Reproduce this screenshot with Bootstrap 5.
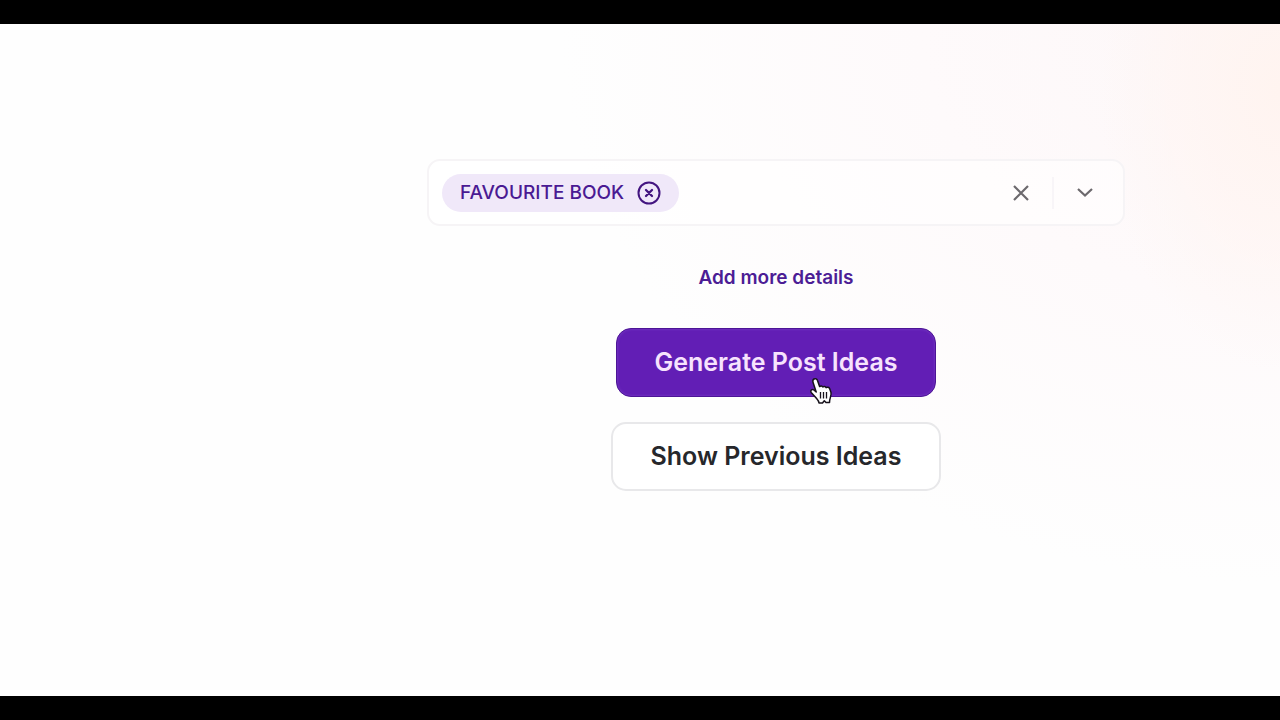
<!DOCTYPE html>
<html lang="en">
<head>
<meta charset="utf-8">
<meta name="viewport" content="width=device-width, initial-scale=1">
<title>Post ideas</title>
<link href="https://cdn.jsdelivr.net/npm/bootstrap@5.3.0/dist/css/bootstrap.min.css" rel="stylesheet">
<style>
  body { font-family: Inter, "Liberation Sans", sans-serif; background: #000; }
  .stage {
    margin: 24px 0;
    padding: 135px 0 0 272px;
    background:
      radial-gradient(ellipse 180px 280px at 100% 10%, #fff4f0 0, #fff5f2b0 50%, #fff5f200 100%),
      radial-gradient(ellipse 720px 560px at 100% 0, #fdf7f8 0, #fefafb 50%, #fefefe00 100%),
      #fefefe;
  }
  .idea-form { width: 100%; max-width: 698px; }
  .picker { height: 67px; padding: 0 28px 0 13px; border: 2px solid #f6f4f6; border-radius: 13px; background: #ffffff90; }
  .topic { height: 38px; padding: 0 18px; gap: 13px; border-radius: 19px; background: #f0e8f9; color: #4a1a93; font-size: 19px; line-height: 30px; font-weight: 500; }
  .icon-btn { padding: 0; border: 0; background: none; color: #6c696d; display: flex; }
  .topic .icon-btn { color: #431580; }
  .tools { height: 36px; gap: 21px; }
  .rule { width: 2px; height: 32px; background: #f8f5f8; }
  .more-link { margin: 37px 0 36px; font-size: 19px; line-height: 29px; font-weight: 600; color: #4c1d95; text-decoration: none; }
  .idea-actions { gap: 25px; }
  .idea-btn { height: 69px; border-radius: 15px; padding: 0 38px; font-size: 25px; font-weight: 600; line-height: 35px; border-width: 2px; }
  .idea-btn-main { --bs-btn-color: #f7e3fd; --bs-btn-bg: #621eb5; --bs-btn-border-color: #4c1596; --bs-btn-hover-color: #fff; --bs-btn-hover-bg: #5719a5; border-width: 1px; box-shadow: inset 0 0 3px 0 #7c40c8; }
  .idea-btn-plain { --bs-btn-color: #26272b; --bs-btn-bg: #fff; --bs-btn-border-color: #e8e8ea; --bs-btn-hover-bg: #f7f7f9; --bs-btn-hover-border-color: #dedee2; }
  .hand { position: absolute; left: 193px; top: 49px; }
</style>
</head>
<body class="min-vh-100 d-flex flex-column">
<main class="stage flex-grow-1">
  <form class="idea-form mx-auto d-flex flex-column align-items-center">
    <div class="picker w-100 d-flex align-items-center justify-content-between">
      <span class="topic d-inline-flex align-items-center">FAVOURITE BOOK
        <button type="button" class="icon-btn" aria-label="Remove favourite book">
          <svg width="24" height="24" viewBox="0 0 24 24" fill="none" stroke="currentColor" stroke-width="2" stroke-linecap="round"><circle cx="12" cy="12" r="10.5"/><path d="M9 9l6 6M15 9l-6 6" stroke-width="2.3"/></svg>
        </button>
      </span>
      <div class="tools d-flex align-items-center">
        <button type="button" class="icon-btn" aria-label="Clear all">
          <svg width="20" height="20" viewBox="0 0 20 20" fill="none" stroke="currentColor" stroke-width="2.2"><path d="M3 3l14 14M17 3L3 17"/></svg>
        </button>
        <span class="rule"></span>
        <button type="button" class="icon-btn" aria-label="Open topic list">
          <svg width="20" height="20" viewBox="0 0 20 20" fill="none" stroke="currentColor" stroke-width="2.2"><path d="M3 6l7 6.500 7-6.500"/></svg>
        </button>
      </div>
    </div>
    <a href="#" class="more-link">Add more details</a>
    <div class="idea-actions d-flex flex-column align-items-center">
      <div class="position-relative d-flex">
        <button type="button" class="btn idea-btn idea-btn-main">Generate Post Ideas</button>
        <svg class="hand" width="25" height="28" viewBox="0 0 25 28" aria-hidden="true"><path d="M5 2C6.500 1.200 8 1.900 8.500 3.500L10.600 9.600C11.500 8.700 13.200 8.900 13.800 10C14.800 9.200 16.500 9.500 17.100 10.700C18.200 9.900 20 10.200 20.600 11.600L22 15.500C22.700 18.500 20.500 21 20.500 25.500H17L15.300 23.700L13.500 26H10C9.800 23.500 8 22.200 6.500 20.300L2.200 15.500C.9 13.500 3 11.600 4.900 13L7.200 14.900L4 5.200C3.600 3.900 3.900 2.600 5 2z" fill="#fff" stroke="#17121b" stroke-width="1.500" stroke-linejoin="round"/><path d="M11.500 15v6.500M14.500 15v6.500M17.500 15v6.500" stroke="#17121b" stroke-width="1.300"/></svg>
      </div>
      <button type="button" class="btn idea-btn idea-btn-plain">Show Previous Ideas</button>
    </div>
  </form>
</main>
<script src="https://cdn.jsdelivr.net/npm/bootstrap@5.3.0/dist/js/bootstrap.bundle.min.js"></script>
</body>
</html>
